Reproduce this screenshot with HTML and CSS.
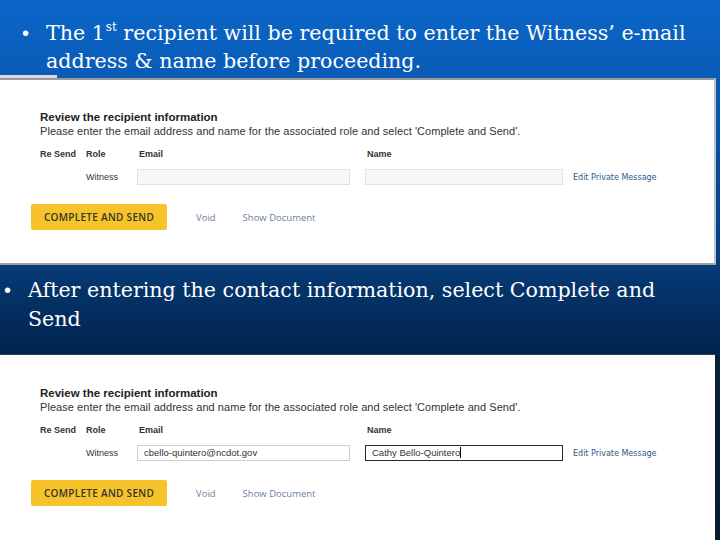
FILE: index.html
```html
<!DOCTYPE html>
<html>
<head>
<meta charset="utf-8">
<link rel="stylesheet" href="styles.css">
</head>
<body>
<div class="slide">
  <div class="bullet b1">
    <span class="dot">•</span>
    <p class="btext">The 1<sup>st</sup> recipient will be required to enter the Witness’ <span class="nw">e-mail</span> address &amp; name before proceeding.</p>
  </div>

  <div class="panel p1">
    <div class="tab"></div>
    <div class="title">Review the recipient information</div>
    <div class="sub">Please enter the email address and name for the associated role and select 'Complete and Send'.</div>
    <div class="grid heads">
      <span>Re Send</span><span>Role</span><span class="h-email">Email</span><span class="h-name">Name</span><span></span>
    </div>
    <div class="grid row">
      <span></span><span class="role">Witness</span>
      <span class="field empty email"></span>
      <span class="field empty name"></span>
      <span class="edit">Edit Private Message</span>
    </div>
    <div class="actions">
      <span class="btn">COMPLETE AND SEND</span>
      <span class="link">Void</span>
      <span class="link">Show Document</span>
    </div>
  </div>

  <div class="bullet b2">
    <span class="dot">•</span>
    <p class="btext">After entering the contact information, select Complete and Send</p>
  </div>

  <div class="panel p2">
    <div class="title">Review the recipient information</div>
    <div class="sub">Please enter the email address and name for the associated role and select 'Complete and Send'.</div>
    <div class="grid heads">
      <span>Re Send</span><span>Role</span><span class="h-email">Email</span><span class="h-name">Name</span><span></span>
    </div>
    <div class="grid row">
      <span></span><span class="role">Witness</span>
      <span class="field filled email">cbello-quintero@ncdot.gov</span>
      <span class="field focus name">Cathy Bello-Quintero<i class="caret"></i></span>
      <span class="edit">Edit Private Message</span>
    </div>
    <div class="actions">
      <span class="btn">COMPLETE AND SEND</span>
      <span class="link">Void</span>
      <span class="link">Show Document</span>
    </div>
  </div>
</div>
</body>
</html>
```

FILE: styles.css
```css
html, body {
  margin: 0;
  padding: 0;
}
body {
  width: 720px;
  height: 540px;
  overflow: hidden;
  background: linear-gradient(to bottom, #0a66c8 0px, #0a5bb6 80px, #073f80 250px, #05356c 285px, #01234d 355px, #001a3a 540px);
  font-family: "Liberation Sans", Arial, sans-serif;
}
.slide {
  display: flex;
  flex-direction: column;
}
.bullet {
  display: flex;
  color: #fff;
  font-family: "DejaVu Serif", "Liberation Serif", serif;
  font-size: 20.6px;
}
.bullet .dot {
  font-family: "Liberation Sans", Arial, sans-serif;
  font-size: 20px;
  width: 24px;
  flex: none;
}
.btext {
  margin: 0;
}
.nw { white-space: nowrap; }
.btext sup {
  font-size: 12px;
  line-height: 12px;
  vertical-align: top;
  display: inline-block;
  margin: 2px 0 0 1px;
}
.b1 {
  padding: 19px 10px 0 22px;
  line-height: 28px;
  height: 59px;
}
.b1 .dot { line-height: 28px; }
.b2 {
  padding: 0 40px 0 4px;
  margin-top: 11px;
  line-height: 29px;
  height: 78px;
}
.b2 .dot { line-height: 29px; }

.panel {
  position: relative;
  width: 716px;
  box-sizing: border-box;
  background: #fff;
  padding: 30px 0 0 40px;
  color: #222;
}
.p1 {
  height: 187px;
  border-top: 2px solid #9a9a9a;
  border-bottom: 2px solid #a0a0a0;
  border-right: 2px solid #b8c4d2;
}
.p1 .tab {
  position: absolute;
  left: 0;
  top: -5px;
  width: 57px;
  height: 3px;
  background: #d6d9de;
}
.p2 {
  width: 717px;
  height: 200px;
  border-top: 1px solid #2a3a50;
  border-right: 2px solid #1a1a1a;
  padding-top: 31px;
}
.title {
  font-size: 11.5px;
  font-weight: bold;
  line-height: 14px;
  color: #222;
}
.sub {
  font-size: 11px;
  line-height: 14px;
  color: #333;
  letter-spacing: 0.05px;
}
.grid {
  display: grid;
  grid-template-columns: 46px 51px 228px 208px auto;
  align-items: center;
}
.heads {
  margin-top: 10px;
  height: 12px;
  font-size: 9px;
  font-weight: bold;
  color: #333;
}
.h-email { padding-left: 2px; }
.h-name { padding-left: 2px; }
.row {
  margin-top: 9px;
  height: 16px;
  font-size: 9px;
  color: #333;
}
.role { font-size: 9px; }
.field {
  box-sizing: border-box;
  height: 16px;
  font-size: 9.5px;
  line-height: 14px;
  padding-left: 6px;
  color: #333;
  white-space: nowrap;
  overflow: hidden;
}
.field.email { width: 213px; }
.field.name { width: 198px; }
.field.empty {
  background: #f7f7f7;
  border: 1px solid #e2e2e2;
}
.field.filled {
  background: #fff;
  border: 1px solid #cfcfcf;
}
.field.focus {
  background: #fff;
  border: 1px solid #2a2a2a;
}
.caret {
  display: inline-block;
  width: 1px;
  height: 11px;
  background: #000;
  vertical-align: -2px;
}
.edit {
  font-family: "DejaVu Sans", Verdana, sans-serif;
  font-size: 8px;
  color: #2b5b8c;
  padding-left: 0;
}
.actions {
  display: flex;
  align-items: center;
  margin-top: 19px;
  margin-left: -9px;
}
.btn {
  width: 136px;
  height: 26px;
  background: #f6c32a;
  border-radius: 2px;
  display: flex;
  align-items: center;
  justify-content: center;
  font-family: "Open Sans", "Liberation Sans", sans-serif;
  font-size: 10px;
  font-weight: 600;
  letter-spacing: 0.3px;
  color: #333;
}
.link {
  font-family: "Open Sans", "Liberation Sans", sans-serif;
  font-size: 9.5px;
  color: #6b7f9c;
}
.btn + .link { margin-left: 29px; }
.link + .link { margin-left: 27px; }
```
